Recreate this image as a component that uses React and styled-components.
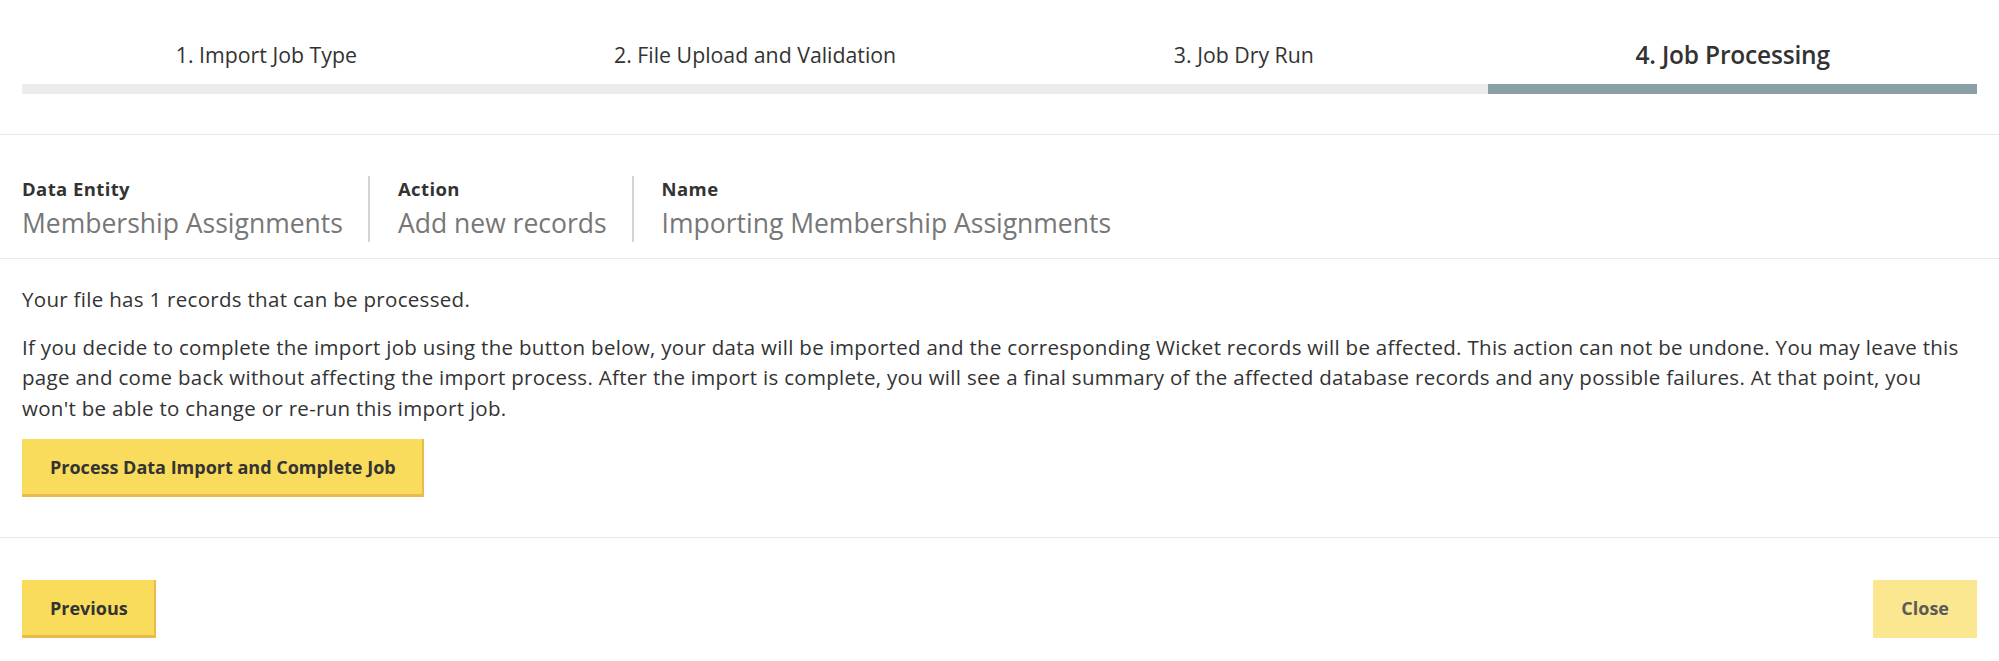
import React from 'react';
import styled, { createGlobalStyle } from 'styled-components';

const GlobalStyle = createGlobalStyle`
  * { box-sizing: border-box; }
  html, body {
    margin: 0;
    padding: 0;
    background: #fff;
    font-family: "Open Sans", "Noto Sans", "Liberation Sans", sans-serif;
    color: #333;
  }
`;

const Page = styled.div`
  width: 100%;
`;

const Section = styled.section`
  padding: ${(p) => p.$pad || '0 22px'};
  border-bottom: ${(p) => (p.$noBorder ? 'none' : '1px solid #e9e9e9')};
`;

const Steps = styled.div`
  display: grid;
  grid-template-columns: repeat(4, 1fr);
`;

const Step = styled.div`
  display: flex;
  flex-direction: column;
  align-items: stretch;
`;

const StepLabel = styled.div`
  height: 30px;
  line-height: 30px;
  text-align: center;
  font-size: ${(p) => (p.$active ? '24.5px' : '21.3px')};
  font-weight: ${(p) => (p.$active ? 600 : 400)};
  letter-spacing: ${(p) => (p.$active ? '-0.2px' : '0')};
  color: #333;
  white-space: nowrap;
`;

const StepBar = styled.div`
  margin-top: 14px;
  height: 10px;
  background: ${(p) => (p.$active ? '#89a0a6' : '#ececec')};
`;

const MetaRow = styled.div`
  display: flex;
  align-items: stretch;
`;

const MetaItem = styled.div`
  display: flex;
  flex-direction: column;
  padding: 0 25px 0 28px;
  border-left: 2px solid #d4d4d4;

  &:first-child {
    padding-left: 0;
    border-left: none;
  }
`;

const MetaLabel = styled.div`
  height: 24px;
  line-height: 26px;
  font-size: 18.5px;
  font-weight: 700;
  letter-spacing: 0.4px;
  color: #333;
`;

const MetaValue = styled.div`
  height: 42px;
  line-height: 46px;
  font-size: 26.5px;
  color: #777;
  white-space: nowrap;
`;

const Text = styled.p`
  margin: 0 0 ${(p) => p.$gap || '17px'};
  font-size: 20.5px;
  letter-spacing: 0.3px;
  line-height: 30.5px;
  color: #333;
`;

const Button = styled.button`
  height: 58px;
  padding: 0 28px 3px;
  border: none;
  border-radius: 0;
  font-family: inherit;
  font-size: 18px;
  font-weight: 700;
  color: ${(p) => (p.disabled ? '#5a5a5a' : '#333')};
  background: ${(p) => (p.disabled ? '#fbe790' : '#f9dc5c')};
  box-shadow: ${(p) => (p.disabled ? 'none' : 'inset -2px -3px 0 #e8ba50')};
  cursor: ${(p) => (p.disabled ? 'default' : 'pointer')};
`;

const Footer = styled.div`
  display: flex;
  justify-content: space-between;
  align-items: center;
`;

const steps = [
  '1. Import Job Type',
  '2. File Upload and Validation',
  '3. Job Dry Run',
  '4. Job Processing',
];

const meta = [
  { label: 'Data Entity', value: 'Membership Assignments' },
  { label: 'Action', value: 'Add new records' },
  { label: 'Name', value: 'Importing Membership Assignments' },
];

export default function App() {
  const current = 3;
  return (
    <Page>
      <GlobalStyle />
      <Section $pad="40px 22px 40px">
        <Steps>
          {steps.map((s, i) => (
            <Step key={s}>
              <StepLabel $active={i === current}>{s}</StepLabel>
              <StepBar $active={i === current} />
            </Step>
          ))}
        </Steps>
      </Section>

      <Section $pad="41px 22px 16px">
        <MetaRow>
          {meta.map((m) => (
            <MetaItem key={m.label}>
              <MetaLabel>{m.label}</MetaLabel>
              <MetaValue>{m.value}</MetaValue>
            </MetaItem>
          ))}
        </MetaRow>
      </Section>

      <Section $pad="25px 22px 40px">
        <Text>Your file has 1 records that can be processed.</Text>
        <Text $gap="16px">
          If you decide to complete the import job using the button below, your data will be imported and the
          corresponding Wicket records will be affected. This action can not be undone. You may leave this page
          and come back without affecting the import process. After the import is complete, you will see a final
          summary of the affected database records and any possible failures. At that point, you won't be able to
          change or re-run this import job.
        </Text>
        <Button>Process Data Import and Complete Job</Button>
      </Section>

      <Section $pad="42px 22px 23px" $noBorder>
        <Footer>
          <Button>Previous</Button>
          <Button disabled>Close</Button>
        </Footer>
      </Section>
    </Page>
  );
}
